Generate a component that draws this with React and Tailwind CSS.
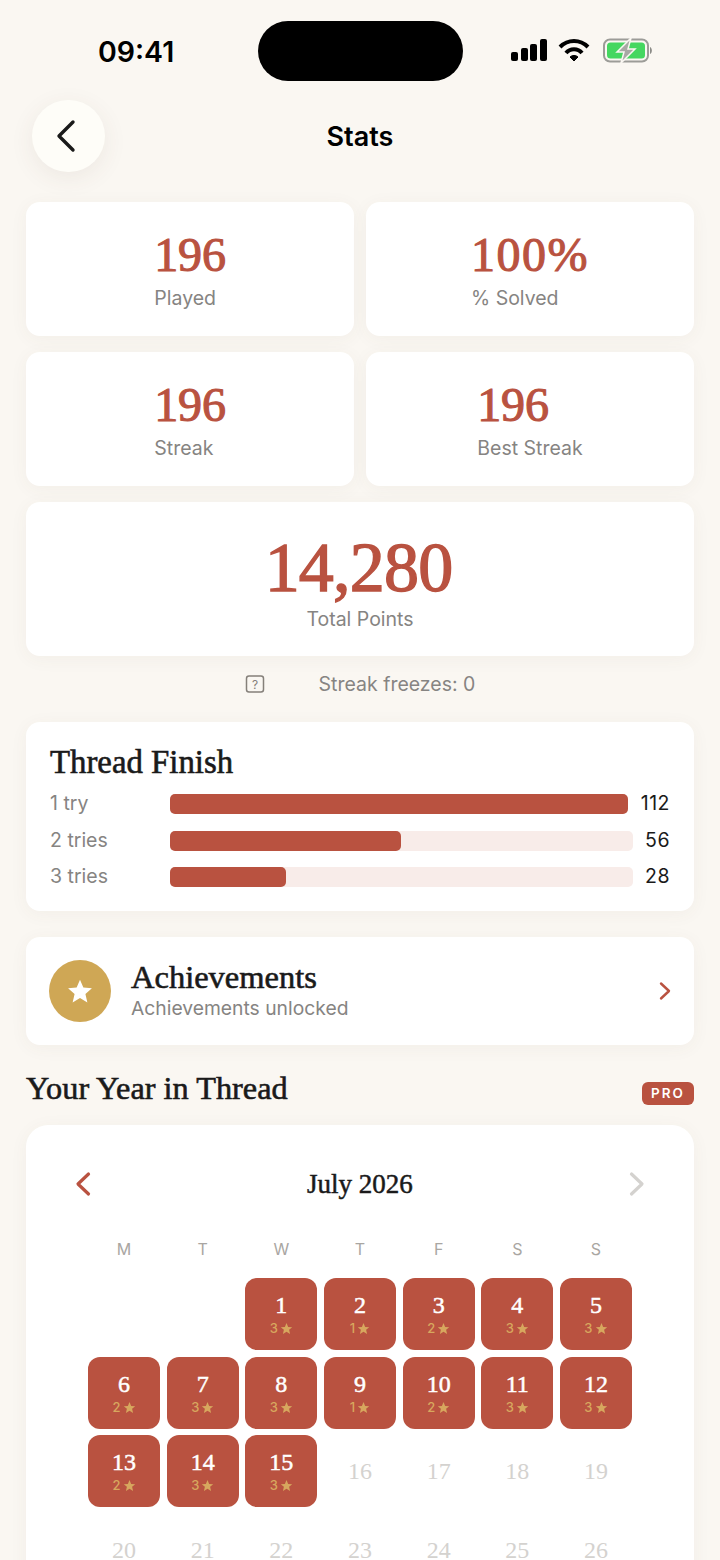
import React from "react";

const SERIF = "font-['Liberation_Serif','DejaVu_Serif',serif]";
const CARD = "bg-white rounded-[14px] shadow-[0_3px_18px_rgba(90,70,50,0.05)]";

function Stat({ value, label, wide }) {
  return (
    <div className={`${CARD} h-[134px] pt-[26px] flex justify-center`}>
      <div className="flex flex-col items-start">
        <div className={`${SERIF} text-[#b95240] [-webkit-text-stroke-width:1.1px] text-[48px] leading-[54px] ${wide ? "tracking-[1.500px]" : "tracking-[-0.200px]"}`}>{value}</div>
        <div className="text-[#868482] text-[19.500px] leading-[24px] mt-[4px]">{label}</div>
      </div>
    </div>
  );
}

function Bar({ label, pct, value }) {
  return (
    <div className="flex items-center h-[20px] gap-[12.500px]">
      <div className="w-[107.500px] text-[19.500px] text-[#868482]">{label}</div>
      <div className="flex-1 h-[20px] rounded-[5px] bg-[#f8ece9]">
        <div className="h-full rounded-[5px] bg-[#b95240]" style={{ width: pct + "%" }} />
      </div>
      <div className="text-right text-[19.500px] tracking-[0.500px] text-[#1a1a1a]">{value}</div>
    </div>
  );
}

const days = [
  null, null, [1, 3], [2, 1], [3, 2], [4, 3], [5, 3],
  [6, 2], [7, 3], [8, 3], [9, 1], [10, 2], [11, 3], [12, 3],
  [13, 2], [14, 3], [15, 3], [16], [17], [18], [19],
  [20], [21], [22], [23], [24], [25], [26],
];

function Day({ d }) {
  if (!d) return <div className="h-[72px]" />;
  const [n, stars] = d;
  if (stars === undefined) {
    return <div className={`${SERIF} h-[72px] flex items-center justify-center text-[24px] text-[#d4d2cf]`}>{n}</div>;
  }
  return (
    <div className="h-[72px] rounded-[12px] bg-[#b95240] flex flex-col items-center pt-[13px]">
      <div className={`${SERIF} text-white text-[24px] leading-[28px] [-webkit-text-stroke-width:0.5px]`}>{n}</div>
      <div className="text-[#d7a75e] text-[13px] font-medium leading-[17px] mt-[1px] flex items-center gap-[2px]">
        <span>{stars}</span>
        <svg width="13" height="13" viewBox="0 0 24 24" fill="#d7a75e"><path d="M12 2l3 7 7.5.6-5.700 4.900 1.800 7.500L12 18l-6.600 4 1.800-7.500L1.500 9.600 9 9z" /></svg>
      </div>
    </div>
  );
}

export default function App() {
  return (
    <div className="w-[720px] h-[1560px] overflow-hidden bg-[#faf7f2] font-['Inter','Liberation_Sans',sans-serif]">
      <div className="h-[100px] relative">
        <div className="absolute left-[98px] top-[36px] text-[28.500px] leading-[32px] font-semibold text-black">09:41</div>
        <div className="absolute left-[258px] top-[21px] w-[205px] h-[60px] rounded-[30px] bg-black" />
        <div className="absolute left-[510px] top-[38px] flex items-center gap-[11px]">
          <svg width="37" height="25" viewBox="0 0 37 25" fill="#000">
            <rect x="1" y="14" width="7" height="9" rx="2" />
            <rect x="11" y="10" width="7" height="13" rx="2" />
            <rect x="20" y="6" width="7" height="17" rx="2" />
            <rect x="30" y="1" width="7" height="22" rx="2" />
          </svg>
          <svg width="32" height="25" viewBox="0 0 32 25" fill="none" stroke="#000" strokeWidth="4">
            <path d="M2 9 C10 1 22 1 30 9" />
            <path d="M8 15 C12 10 20 10 24 15" />
            <path d="M12 19 L16 23 L20 19 C18 17 14 17 12 19Z" fill="#000" strokeWidth="1" />
          </svg>
          <svg width="52" height="25" viewBox="0 0 52 25" className="ml-[2px]">
            <rect x="1" y="1.500" width="44" height="22" rx="6" fill="none" stroke="#9c9c98" strokeWidth="2" />
            <rect x="4" y="4.500" width="38" height="16" rx="3.500" fill="#45d760" />
            <path d="M47 9 C49.500 10 49.500 15 47 16Z" fill="#8c8c88" />
            <path d="M28 0 L14 14 L21 14 L18 25 L32 11 L25 11 Z" fill="#a8a8a4" stroke="#faf7f2" strokeWidth="1.500" />
          </svg>
        </div>
      </div>

      <div className="h-[72px] relative flex items-center justify-center">
        <div className="absolute left-[32px] top-0 w-[73px] h-[72px] rounded-full bg-[#fefdf8] shadow-[0_6px_24px_rgba(90,70,50,0.08)] flex items-center justify-center">
          <svg width="24" height="34" viewBox="0 0 24 34" fill="none" stroke="#1a1a1a" strokeWidth="3.400" strokeLinecap="round" strokeLinejoin="round" className="mr-[5px]"><path d="M19 3 L5 17 L19 31" /></svg>
        </div>
        <div className="text-[27px] font-semibold text-black relative top-[1px]">Stats</div>
      </div>

      <div className="px-[26px] mt-[30px]">
        <div className="grid grid-cols-2 gap-x-[12px] gap-y-[16px]">
          <Stat value="196" label="Played" />
          <Stat value="100%" label="% Solved" wide />
          <Stat value="196" label="Streak" />
          <Stat value="196" label="Best Streak" />
        </div>
        <div className={`${CARD} mt-[16px] h-[154px] pt-[28px] flex flex-col items-center`}>
          <div className={`${SERIF} text-[#b95240] [-webkit-text-stroke-width:1.400px] text-[70px] leading-[76px] tracking-[-0.800px] mr-[3px]`}>14,280</div>
          <div className="text-[#868482] text-[19.500px] leading-[24px] mt-[1px]">Total Points</div>
        </div>

        <div className="relative h-[56px] flex items-center justify-center text-[19.500px] text-[#868482]">
          <svg className="absolute left-[219px] top-[19px]" width="20" height="18" viewBox="0 0 20 18" fill="none" stroke="#85807a" strokeWidth="1.500">
            <rect x="1.500" y="1" width="17" height="16" rx="2.500" />
            <text x="10" y="13.500" fontSize="12" textAnchor="middle" fill="#85807a" stroke="none">?</text>
          </svg>
          <span className="ml-[74px] relative top-[1px]">Streak freezes: 0</span>
        </div>

        <div className={`${CARD} mt-[10px] h-[189px] px-[24px] pt-[22px]`}>
          <div className={`${SERIF} [-webkit-text-stroke-width:0.6px] text-[32.800px] leading-[36px] text-[#1a1a1a]`}>Thread Finish</div>
          <div className="mt-[14px] flex flex-col gap-[16.500px]">
            <Bar label="1 try" pct={100} value="112" />
            <Bar label="2 tries" pct={50} value="56" />
            <Bar label="3 tries" pct={25} value="28" />
          </div>
        </div>

        <div className={`${CARD} mt-[26px] h-[108px] px-[23px] flex items-center`}>
          <div className="w-[62px] h-[62px] rounded-full bg-[#cfa755] flex items-center justify-center">
            <svg width="26" height="26" viewBox="0 0 24 24" fill="#fff"><path d="M12 1.500l3.100 7.300 7.900.7-6 5.200 1.800 7.800L12 18.400l-6.800 4.100L7 14.700l-6-5.200 7.900-.7z" /></svg>
          </div>
          <div className="ml-[20px] flex-1">
            <div className={`${SERIF} [-webkit-text-stroke-width:0.6px] text-[32.500px] leading-[34px] text-[#1a1a1a]`}>Achievements</div>
            <div className="text-[19.300px] leading-[28px] text-[#868482]">Achievements unlocked</div>
          </div>
          <svg width="14" height="20" viewBox="0 0 14 20" fill="none" stroke="#b95240" strokeWidth="2.400" strokeLinecap="round" strokeLinejoin="round" className="mr-[-1px]"><path d="M3 2.500 L11 10 L3 17.500" /></svg>
        </div>

        <div className="mt-[25px] h-[36px] flex items-center justify-between">
          <div className={`${SERIF} [-webkit-text-stroke-width:0.6px] text-[32.300px] text-[#1a1a1a]`}>Your Year in Thread</div>
          <div className="mt-[10px] w-[52px] h-[23px] rounded-[6px] bg-[#b95240] text-white text-[13.500px] font-semibold tracking-[2px] flex items-center justify-center">PRO</div>
        </div>

        <div className="mt-[19px] h-[600px] bg-white rounded-t-[22px] px-[62px] pt-[45px] shadow-[0_3px_18px_rgba(90,70,50,0.05)]">
          <div className="h-[28px] flex items-center justify-between mx-[-14px]">
            <svg width="18" height="26" viewBox="0 0 18 26" fill="none" stroke="#b95240" strokeWidth="3.200" strokeLinecap="round" strokeLinejoin="round"><path d="M14.500 3 L4 13 L14.500 23" /></svg>
            <div className={`${SERIF} [-webkit-text-stroke-width:0.5px] text-[27px] text-[#1a1a1a]`}>July 2026</div>
            <svg width="18" height="26" viewBox="0 0 18 26" fill="none" stroke="#d4d2cf" strokeWidth="3.200" strokeLinecap="round" strokeLinejoin="round"><path d="M3.500 3 L14 13 L3.500 23" /></svg>
          </div>
          <div className="mt-[41px] grid grid-cols-7 gap-x-[6.500px] text-center text-[16px] leading-[20px] text-[#a9a6a2]">
            {["M", "T", "W", "T", "F", "S", "S"].map((d, i) => <div key={i}>{d}</div>)}
          </div>
          <div className="mt-[19px] grid grid-cols-7 gap-x-[6.500px] gap-y-[6.500px]">
            {days.map((d, i) => <Day key={i} d={d} />)}
          </div>
        </div>
      </div>
    </div>
  );
}
